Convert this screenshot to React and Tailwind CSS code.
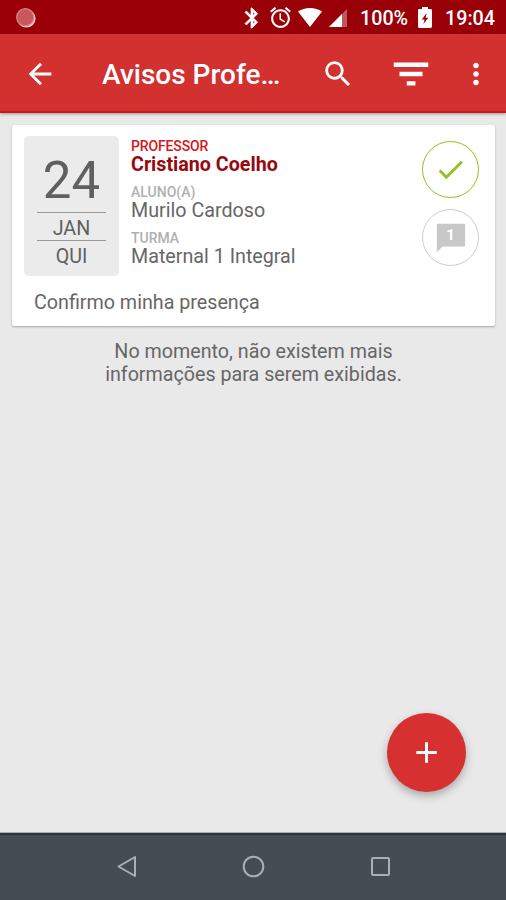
import React, { useState } from 'react';

const notices = [
  {
    id: 1,
    day: '24',
    month: 'JAN',
    weekday: 'QUI',
    teacher: 'Cristiano Coelho',
    student: 'Murilo Cardoso',
    group: 'Maternal 1 Integral',
    message: 'Confirmo minha presença',
    replies: 1,
  },
];

function Icon({ d, className }) {
  return (
    <svg viewBox="0 0 24 24" fill="currentColor" className={className}>
      <path d={d} />
    </svg>
  );
}

function StatusBar() {
  return (
    <div className="flex h-[34px] items-center bg-[#990008] pl-4 pr-[11px] pt-px text-white">
      <svg viewBox="0 0 20 20" className="h-5 w-5">
        <circle cx="10.4" cy="10.4" r="9.2" fill="#f3cdca" />
        <circle cx="9.3" cy="9.3" r="8.6" fill="#c9585e" stroke="#d9898a" strokeWidth="1.2" />
      </svg>
      <Icon className="ml-auto h-6 w-6 stroke-white stroke-[0.7]" d="M17.71 7.71L12 2h-1v7.59L6.41 5 5 6.41 10.59 12 5 17.59 6.41 19 11 14.41V22h1l5.71-5.71-4.3-4.29 4.3-4.29zM13 5.83l1.88 1.88L13 9.59V5.83zm1.88 10.46L13 18.17v-3.76l1.88 1.88z" />
      <Icon className="ml-1 h-[25px] w-[25px]" d="M22 5.72l-4.6-3.86-1.29 1.53 4.6 3.86L22 5.72zM7.88 3.39L6.6 1.86 2 5.71l1.29 1.53 4.59-3.85zM12.5 8H11v6l4.75 2.85.75-1.23-4-2.37V8zM12 4c-4.97 0-9 4.03-9 9s4.02 9 9 9c4.97 0 9-4.03 9-9s-4.03-9-9-9zm0 16c-3.87 0-7-3.13-7-7s3.13-7 7-7 7 3.13 7 7-3.13 7-7 7z" />
      <svg viewBox="0 0 24 19" className="ml-[5px] h-[19px] w-6" fill="currentColor">
        <path d="M0 3.6C3.4 1.2 7.5 0 12 0s8.6 1.2 12 3.6L12 19z" />
      </svg>
      <svg viewBox="0 0 18 18" className="ml-[7px] h-[18px] w-[18px]" fill="currentColor">
        <path d="M0 18L18 0v18z" opacity=".35" />
        <path d="M0 18L13 5v13z" />
      </svg>
      <span className="ml-[13px] w-[49px] pt-[2px] text-[19.7px] font-medium leading-none">100%</span>
      <svg viewBox="0 0 14 21" className="ml-[9px] h-[21px] w-[14px]">
        <path d="M4 0h6v2h2.6Q14 2 14 3.4v16.2Q14 21 12.6 21H1.4Q0 21 0 19.6V3.4Q0 2 1.4 2H4z" fill="#fff" />
        <path d="M8.7 6L3.8 12.5h2.7L5.4 17l4.9-6.2H7.6z" fill="#990008" />
      </svg>
      <span className="ml-[13px] w-[50px] pt-[2px] text-right text-[19.7px] font-medium leading-none">19:04</span>
    </div>
  );
}

function Toolbar() {
  return (
    <header className="relative flex h-[79px] items-center border-b-2 border-[#c9181c] bg-[#d33030] pl-[23px] pr-[13px] pt-[2px] text-white shadow-[0_1px_3px_rgba(0,0,0,0.35)]">
      <button aria-label="Voltar">
        <Icon className="h-[34px] w-[34px]" d="M20 11H7.83l5.59-5.59L12 4l-8 8 8 8 1.41-1.41L7.83 13H20v-2z" />
      </button>
      <h1 className="ml-[45px] w-[180px] whitespace-nowrap pt-[2px] text-[28px] font-medium leading-none">Avisos Profe…</h1>
      <button aria-label="Buscar" className="ml-[39px]">
        <Icon className="h-[34px] w-[34px]" d="M15.5 14h-.79l-.28-.27A6.471 6.471 0 0 0 16 9.5 6.5 6.5 0 1 0 9.5 16c1.61 0 3.09-.59 4.23-1.57l.27.28v.79l5 4.99L20.49 19l-4.99-5zm-6 0C7.01 14 5 11.99 5 9.5S7.01 5 9.5 5 14 7.01 14 9.5 11.99 14 9.5 14z" />
      </button>
      <button aria-label="Filtrar" className="ml-[33px]">
        <Icon className="h-[46px] w-[46px]" d="M9.8 18h4.5v-2.2H9.8V18zM3 6v2.4h18V6H3zm3 7.2h12v-2.4H6v2.4z" />
      </button>
      <button aria-label="Mais opções" className="ml-auto">
        <Icon className="h-[34px] w-[34px]" d="M12 8c1.1 0 2-.9 2-2s-.9-2-2-2-2 .9-2 2 .9 2 2 2zm0 2c-1.1 0-2 .9-2 2s.9 2 2 2 2-.9 2-2-.9-2-2-2zm0 6c-1.1 0-2 .9-2 2s.9 2 2 2 2-.9 2-2-.9-2-2-2z" />
      </button>
    </header>
  );
}

function NoticeCard({ notice }) {
  const [confirmed, setConfirmed] = useState(true);

  return (
    <article className="h-[201px] rounded-[2px] bg-white pl-3 pr-4 pt-[11px] text-[#666] shadow-[0_1px_2px_rgba(0,0,0,0.3)]">
      <div className="flex">
        <div className="flex h-[140px] w-[95px] flex-col items-center rounded-[5px] bg-[#ebebeb] pt-[18px] text-[#606060]">
          <span className="h-[58px] text-[51px] leading-[53px]">{notice.day}</span>
          <span className="h-[29px] w-[69px] border-y border-[#999] text-center text-[19.7px] leading-[31px]">{notice.month}</span>
          <span className="text-[19.7px] leading-[31px]">{notice.weekday}</span>
        </div>

        <dl className="ml-3 flex-1 text-[19.7px] leading-[24px]">
          <dt className="h-[17px] text-[14px] font-medium leading-[20px] tracking-[-0.01em] text-[#d6161b]">PROFESSOR</dt>
          <dd className="h-[29px] font-bold text-[#98080f]">{notice.teacher}</dd>
          <dt className="h-[17px] text-[14px] font-medium leading-[20px] text-[#b0b0b0]">ALUNO(A)</dt>
          <dd className="h-[29px]">{notice.student}</dd>
          <dt className="h-[17px] text-[14px] font-medium leading-[20px] text-[#b0b0b0]">TURMA</dt>
          <dd className="h-[29px]">{notice.group}</dd>
        </dl>

        <div className="flex flex-col gap-[11px] pt-[5px]">
          <button
            aria-label="Confirmar"
            onClick={() => setConfirmed(!confirmed)}
            className={`flex h-[57px] w-[57px] items-center justify-center rounded-full border ${
              confirmed ? 'border-[#8fc31f] text-[#8fc31f]' : 'border-[#ccc] text-[#ccc]'
            }`}
          >
            <Icon className="h-[33px] w-[33px]" d="M9 16.17L4.83 12l-1.42 1.41L9 19 21 7l-1.41-1.41z" />
          </button>
          <button aria-label="Respostas" className="relative flex h-[57px] w-[57px] items-center justify-center rounded-full border border-[#ccc] text-[#c8c8c8]">
            <Icon className="h-[34px] w-[34px]" d="M21 2H3c-.6 0-1 .4-1 1v19l4-4h15c.6 0 1-.4 1-1V3c0-.6-.4-1-1-1z" />
            <span className="absolute inset-x-0 top-[17px] text-center text-[15px] font-bold leading-[16px] text-white">{notice.replies}</span>
          </button>
        </div>
      </div>
      <p className="pl-[10px] pt-[15px] text-[19.7px] leading-[23px]">{notice.message}</p>
    </article>
  );
}

function NavigationBar() {
  return (
    <nav className="flex h-[67px] justify-center gap-[102px] border-t-2 border-[#22393a] bg-[#464d52] pt-[19px] text-[#a9b0b2]">
      <svg viewBox="0 0 25 25" className="h-[25px] w-[25px]" fill="none" stroke="currentColor" strokeWidth="2" strokeLinejoin="round">
        <path d="M21 3v19L4.5 12.5z" />
      </svg>
      <svg viewBox="0 0 25 25" className="h-[25px] w-[25px]" fill="none" stroke="currentColor" strokeWidth="2">
        <circle cx="12.5" cy="12.5" r="9.8" />
      </svg>
      <svg viewBox="0 0 25 25" className="h-[25px] w-[25px]" fill="none" stroke="currentColor" strokeWidth="2">
        <rect x="4" y="4" width="17" height="17" rx="1" />
      </svg>
    </nav>
  );
}

export default function App() {
  return (
    <div className="flex h-[900px] w-[506px] flex-col overflow-hidden bg-[#e9e9e9] font-['Roboto',sans-serif]">
      <StatusBar />
      <Toolbar />
      <main className="relative flex-1 border-b border-[#aaa] pl-3 pr-[11px] pt-3">
        {notices.map(notice => (
          <NoticeCard key={notice.id} notice={notice} />
        ))}
        <p className="mx-auto mt-[14px] w-[310px] text-center text-[19.7px] leading-[23px] text-[#666]">
          No momento, não existem mais informações para serem exibidas.
        </p>
        <button
          aria-label="Novo aviso"
          className="absolute bottom-[40px] right-10 flex h-[79px] w-[79px] items-center justify-center rounded-full bg-[#d63031] text-white shadow-[0_4px_8px_rgba(0,0,0,0.28)]"
        >
          <Icon className="h-[35px] w-[35px]" d="M19 13h-6v6h-2v-6H5v-2h6V5h2v6h6v2z" />
        </button>
      </main>
      <NavigationBar />
    </div>
  );
}
